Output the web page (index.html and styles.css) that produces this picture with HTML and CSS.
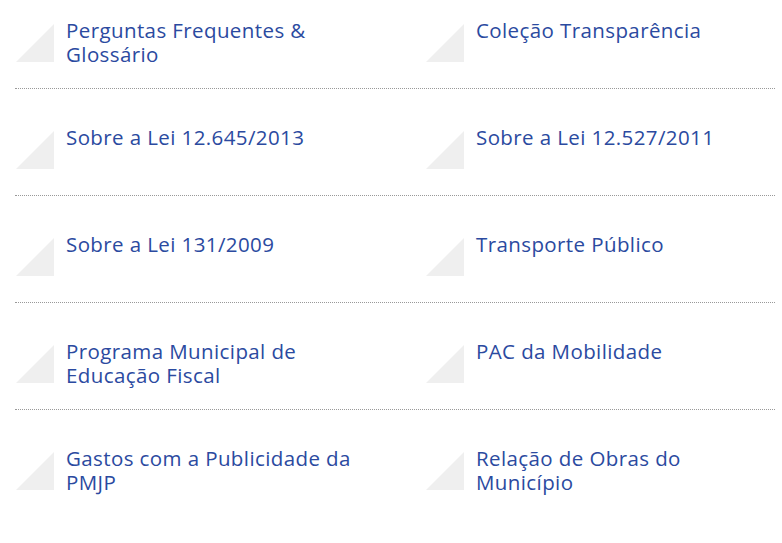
FILE: index.html
```html
<!DOCTYPE html>
<html lang="pt-BR">
<head>
<meta charset="utf-8">
<title>Links</title>
<link rel="stylesheet" href="styles.css">
</head>
<body>
<div class="list">
  <div class="row">
    <a class="item" href="#"><svg class="tri" viewBox="0 0 38 38"><polygon points="38,0 38,38 0,38"/></svg><span class="label">Perguntas Frequentes &amp; Glossário</span></a>
    <a class="item" href="#"><svg class="tri" viewBox="0 0 38 38"><polygon points="38,0 38,38 0,38"/></svg><span class="label">Coleção Transparência</span></a>
  </div>
  <div class="row">
    <a class="item" href="#"><svg class="tri" viewBox="0 0 38 38"><polygon points="38,0 38,38 0,38"/></svg><span class="label">Sobre a Lei 12.645/2013</span></a>
    <a class="item" href="#"><svg class="tri" viewBox="0 0 38 38"><polygon points="38,0 38,38 0,38"/></svg><span class="label">Sobre a Lei 12.527/2011</span></a>
  </div>
  <div class="row">
    <a class="item" href="#"><svg class="tri" viewBox="0 0 38 38"><polygon points="38,0 38,38 0,38"/></svg><span class="label">Sobre a Lei 131/2009</span></a>
    <a class="item" href="#"><svg class="tri" viewBox="0 0 38 38"><polygon points="38,0 38,38 0,38"/></svg><span class="label">Transporte Público</span></a>
  </div>
  <div class="row">
    <a class="item" href="#"><svg class="tri" viewBox="0 0 38 38"><polygon points="38,0 38,38 0,38"/></svg><span class="label">Programa Municipal de Educação Fiscal</span></a>
    <a class="item" href="#"><svg class="tri" viewBox="0 0 38 38"><polygon points="38,0 38,38 0,38"/></svg><span class="label">PAC da Mobilidade</span></a>
  </div>
  <div class="row">
    <a class="item" href="#"><svg class="tri" viewBox="0 0 38 38"><polygon points="38,0 38,38 0,38"/></svg><span class="label">Gastos com a Publicidade da PMJP</span></a>
    <a class="item" href="#"><svg class="tri" viewBox="0 0 38 38"><polygon points="38,0 38,38 0,38"/></svg><span class="label">Relação de Obras do Município</span></a>
  </div>
</div>
</body>
</html>
```
FILE: styles.css
```css
html, body {
  margin: 0;
  padding: 0;
  background: #ffffff;
}
body {
  font-family: "Open Sans", "Lato", sans-serif;
}
.list {
  margin-left: 15px;
  width: 760px;
}
.row {
  box-sizing: border-box;
  height: 107px;
  padding-top: 36px;
  display: grid;
  grid-template-columns: 410px 1fr;
  border-bottom: 1px dotted #999999;
}
.row:first-child {
  height: 89px;
  padding-top: 18px;
}
.row:last-child {
  border-bottom: none;
}
.item {
  display: flex;
  align-items: flex-start;
  gap: 12px;
  text-decoration: none;
  color: #2b4aa0;
}
.tri {
  flex: none;
  width: 38px;
  height: 38px;
  margin-top: 6px;
  margin-left: 1px;
}
.tri polygon {
  fill: #efefef;
}
.label {
  font-size: 20.5px;
  line-height: 24px;
  letter-spacing: 0.4px;
  max-width: 298px;
}
```
